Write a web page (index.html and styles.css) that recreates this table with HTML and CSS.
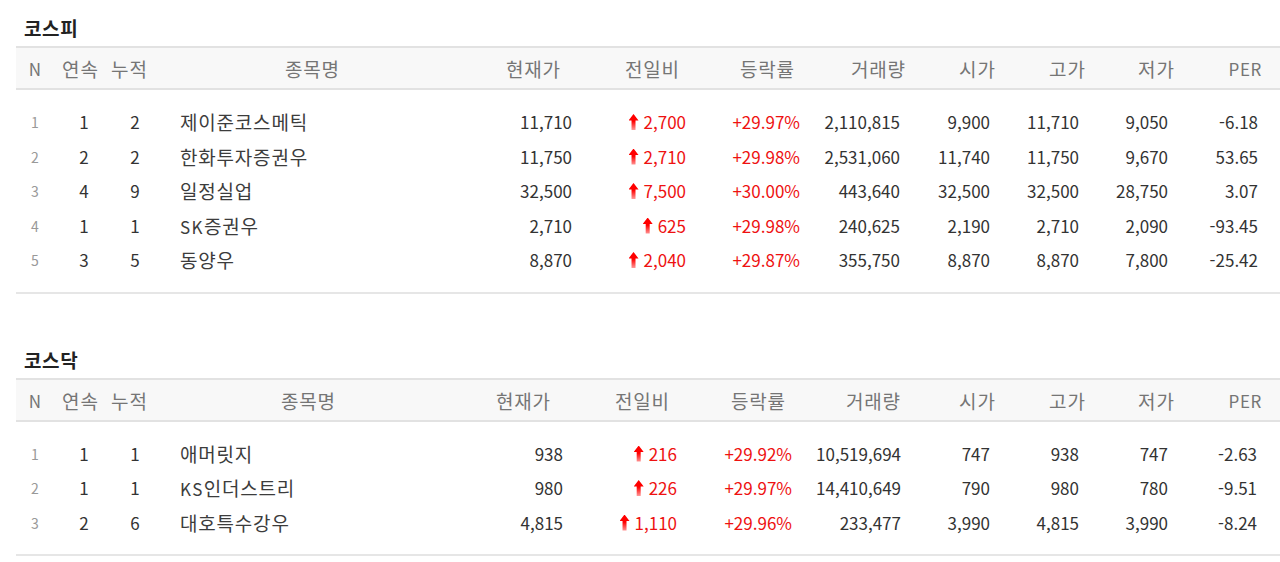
FILE: index.html
```html
<!DOCTYPE html>
<html lang="ko">
<head>
<meta charset="utf-8">
<title>상한가 종목</title>
<link rel="stylesheet" href="styles.css">
</head>
<body>
<section class="market kospi">
  <h2 class="title">코스피</h2>
  <div class="grid head">
    <div class="cell en">N</div><div class="cell">연속</div><div class="cell">누적</div><div class="cell">종목명</div>
    <div class="cell">현재가</div><div class="cell">전일비</div><div class="cell">등락률</div><div class="cell">거래량</div>
    <div class="cell">시가</div><div class="cell">고가</div><div class="cell">저가</div><div class="cell en">PER</div>
  </div>
  <div class="body">
    <div class="grid row">
      <div class="cell no">1</div><div class="cell">1</div><div class="cell">2</div><div class="cell name">제이준코스메틱</div>
      <div class="cell">11,710</div><div class="cell up"><i class="arrow"></i>2,700</div><div class="cell up">+29.97%</div><div class="cell">2,110,815</div>
      <div class="cell">9,900</div><div class="cell">11,710</div><div class="cell">9,050</div><div class="cell">-6.18</div>
    </div>
    <div class="grid row">
      <div class="cell no">2</div><div class="cell">2</div><div class="cell">2</div><div class="cell name">한화투자증권우</div>
      <div class="cell">11,750</div><div class="cell up"><i class="arrow"></i>2,710</div><div class="cell up">+29.98%</div><div class="cell">2,531,060</div>
      <div class="cell">11,740</div><div class="cell">11,750</div><div class="cell">9,670</div><div class="cell">53.65</div>
    </div>
    <div class="grid row">
      <div class="cell no">3</div><div class="cell">4</div><div class="cell">9</div><div class="cell name">일정실업</div>
      <div class="cell">32,500</div><div class="cell up"><i class="arrow"></i>7,500</div><div class="cell up">+30.00%</div><div class="cell">443,640</div>
      <div class="cell">32,500</div><div class="cell">32,500</div><div class="cell">28,750</div><div class="cell">3.07</div>
    </div>
    <div class="grid row">
      <div class="cell no">4</div><div class="cell">1</div><div class="cell">1</div><div class="cell name"><span class="en">SK</span>증권우</div>
      <div class="cell">2,710</div><div class="cell up"><i class="arrow"></i>625</div><div class="cell up">+29.98%</div><div class="cell">240,625</div>
      <div class="cell">2,190</div><div class="cell">2,710</div><div class="cell">2,090</div><div class="cell">-93.45</div>
    </div>
    <div class="grid row">
      <div class="cell no">5</div><div class="cell">3</div><div class="cell">5</div><div class="cell name">동양우</div>
      <div class="cell">8,870</div><div class="cell up"><i class="arrow"></i>2,040</div><div class="cell up">+29.87%</div><div class="cell">355,750</div>
      <div class="cell">8,870</div><div class="cell">8,870</div><div class="cell">7,800</div><div class="cell">-25.42</div>
    </div>
  </div>
</section>

<section class="market kosdaq">
  <h2 class="title">코스닥</h2>
  <div class="grid head">
    <div class="cell en">N</div><div class="cell">연속</div><div class="cell">누적</div><div class="cell">종목명</div>
    <div class="cell">현재가</div><div class="cell">전일비</div><div class="cell">등락률</div><div class="cell">거래량</div>
    <div class="cell">시가</div><div class="cell">고가</div><div class="cell">저가</div><div class="cell en">PER</div>
  </div>
  <div class="body">
    <div class="grid row">
      <div class="cell no">1</div><div class="cell">1</div><div class="cell">1</div><div class="cell name">애머릿지</div>
      <div class="cell">938</div><div class="cell up"><i class="arrow"></i>216</div><div class="cell up">+29.92%</div><div class="cell">10,519,694</div>
      <div class="cell">747</div><div class="cell">938</div><div class="cell">747</div><div class="cell">-2.63</div>
    </div>
    <div class="grid row">
      <div class="cell no">2</div><div class="cell">1</div><div class="cell">1</div><div class="cell name"><span class="en">KS</span>인더스트리</div>
      <div class="cell">980</div><div class="cell up"><i class="arrow"></i>226</div><div class="cell up">+29.97%</div><div class="cell">14,410,649</div>
      <div class="cell">790</div><div class="cell">980</div><div class="cell">780</div><div class="cell">-9.51</div>
    </div>
    <div class="grid row">
      <div class="cell no">3</div><div class="cell">2</div><div class="cell">6</div><div class="cell name">대호특수강우</div>
      <div class="cell">4,815</div><div class="cell up"><i class="arrow"></i>1,110</div><div class="cell up">+29.96%</div><div class="cell">233,477</div>
      <div class="cell">3,990</div><div class="cell">4,815</div><div class="cell">3,990</div><div class="cell">-8.24</div>
    </div>
  </div>
</section>
</body>
</html>
```

FILE: styles.css
```css
html, body {
  margin: 0;
  padding: 0;
  overflow: hidden;
  background: #ffffff;
}

body {
  font-family: "Noto Sans CJK KR", "Noto Sans", sans-serif;
  font-size: 17px;
  color: #333333;
}

.market {
  width: 1274px;
  margin-left: 16px;
}

.kosdaq {
  margin-top: 54px;
}

.title {
  margin: 16px 0 6px 8px;
  font-size: 19px;
  line-height: 24px;
  font-weight: bold;
  letter-spacing: 0.6px;
  color: #222222;
}

.grid {
  display: grid;
}

.kospi .grid {
  grid-template-columns: 38px 52px 46px 320px 122px 116px 114px 108px 90px 90px 88px 90px;
}

.kosdaq .grid {
  grid-template-columns: 38px 52px 46px 312px 118px 120px 112px 118px 90px 90px 88px 90px;
}

.head {
  height: 38px;
  padding-top: 2px;
  border-top: 2px solid #e2e2e2;
  border-bottom: 2px solid #e2e2e2;
  background: #f8f8f8;
  line-height: 38px;
  color: #757575;
}

.head .cell {
  text-align: center;
  white-space: nowrap;
  font-size: 19px;
  letter-spacing: 0.8px;
  padding-left: 0.8px;
}

.head .cell.en {
  font-size: 17px;
  letter-spacing: 0.6px;
  padding-left: 0.6px;
}

.body {
  padding: 15px 0 14px;
  border-bottom: 2px solid #e6e6e6;
}

.row {
  height: 34.5px;
  line-height: 34.5px;
}

.row .cell {
  text-align: right;
  white-space: nowrap;
}

.row .cell.no {
  text-align: center;
  font-size: 14px;
  color: #999999;
}

.row .cell:nth-child(2) {
  text-align: center;
  padding-left: 8px;
}

.row .cell:nth-child(3) {
  text-align: center;
  padding-left: 12px;
}

.row .cell.name {
  text-align: left;
  padding-left: 28px;
  font-size: 19px;
  letter-spacing: 0.8px;
  color: #3c3c3c;
}

.row .cell.name .en {
  font-size: 17px;
  letter-spacing: 1.4px;
}

.row .cell.up {
  color: #ee1111;
}

.arrow {
  display: inline-block;
  width: 10px;
  height: 16px;
  margin-right: 5px;
  vertical-align: -1px;
  background: linear-gradient(#ff0000, #ff0000 45%, #ff9a9a);
  clip-path: polygon(50% 0, 100% 40%, 70% 40%, 70% 100%, 30% 100%, 30% 40%, 0 40%);
}

/* right padding of numeric columns, kospi */
.kospi .row .cell:nth-child(5) { padding-right: 22px; }
.kospi .row .cell:nth-child(6) { padding-right: 24px; }
.kospi .row .cell:nth-child(7) { padding-right: 24px; }
.kospi .row .cell:nth-child(8) { padding-right: 32px; }
.kospi .row .cell:nth-child(9) { padding-right: 32px; }
.kospi .row .cell:nth-child(10) { padding-right: 33px; }
.kospi .row .cell:nth-child(11) { padding-right: 32px; }
.kospi .row .cell:nth-child(12) { padding-right: 32px; }

/* right padding of numeric columns, kosdaq */
.kosdaq .row .cell:nth-child(5) { padding-right: 19px; }
.kosdaq .row .cell:nth-child(6) { padding-right: 25px; }
.kosdaq .row .cell:nth-child(7) { padding-right: 22px; }
.kosdaq .row .cell:nth-child(8) { padding-right: 31px; }
.kosdaq .row .cell:nth-child(9) { padding-right: 32px; }
.kosdaq .row .cell:nth-child(10) { padding-right: 33px; }
.kosdaq .row .cell:nth-child(11) { padding-right: 32px; }
.kosdaq .row .cell:nth-child(12) { padding-right: 33px; }
```
